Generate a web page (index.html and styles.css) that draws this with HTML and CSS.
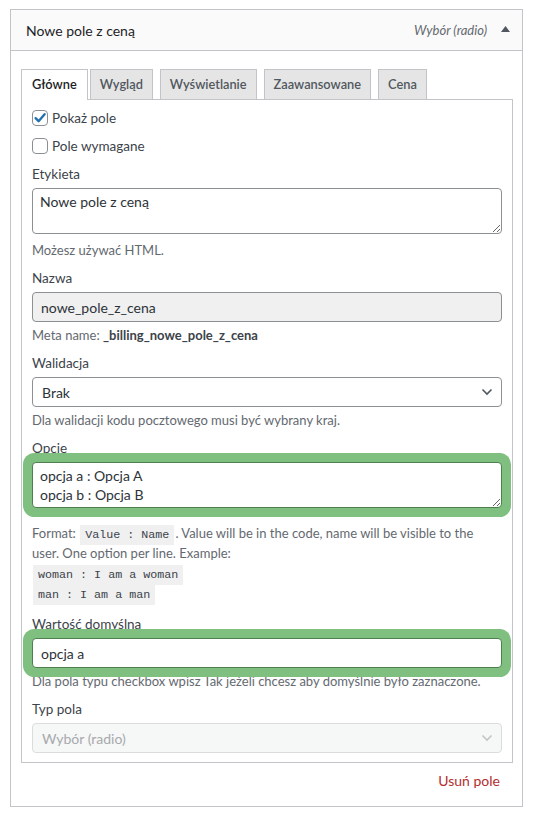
FILE: index.html
```html
<!DOCTYPE html>
<html lang="pl">
<head>
<meta charset="utf-8">
<title>Nowe pole z ceną</title>
<link rel="stylesheet" href="styles.css">
</head>
<body>
<div class="postbox">
  <div class="postbox-header">
    <span class="title">Nowe pole z ceną</span>
    <span class="type">Wybór (radio)</span>
    <span class="toggle"><svg width="9" height="6" viewBox="0 0 9 6"><path d="M0 6 L4.5 0 L9 6 Z" fill="#50575e"/></svg></span>
  </div>
  <div class="postbox-body">
    <div class="tabs">
      <a class="tab active">Główne</a>
      <a class="tab">Wygląd</a>
      <a class="tab">Wyświetlanie</a>
      <a class="tab">Zaawansowane</a>
      <a class="tab">Cena</a>
    </div>
    <div class="panel">
      <div class="check"><span class="cb"><svg width="14" height="14" viewBox="0 0 14 14"><path d="M2.6 7.2 L5.6 10.2 L11.6 3.2" fill="none" stroke="#2271b1" stroke-width="2.4" stroke-linecap="round" stroke-linejoin="round"/></svg></span>Pokaż pole</div>
      <div class="check"><span class="cb"></span>Pole wymagane</div>

      <div class="label">Etykieta</div>
      <textarea class="ta" readonly>Nowe pole z ceną</textarea>
      <p class="desc desc-first">Możesz używać HTML.</p>

      <div class="label">Nazwa</div>
      <input class="inp inp-ro" type="text" value="nowe_pole_z_cena" readonly>
      <p class="desc">Meta name: <strong>_billing_nowe_pole_z_cena</strong></p>

      <div class="label">Walidacja</div>
      <div class="sel">
        <span class="sel-val">Brak</span>
        <svg class="chev" width="12" height="8" viewBox="0 0 12 8"><path d="M1.5 1.5 L6 6 L10.5 1.5" fill="none" stroke="#50575e" stroke-width="1.6"/></svg>
      </div>
      <p class="desc">Dla walidacji kodu pocztowego musi być wybrany kraj.</p>

      <div class="label">Opcje</div>
      <textarea class="ta hl" readonly>opcja a : Opcja A
opcja b : Opcja B</textarea>
      <p class="desc desc-opts">Format: <code>Value : Name</code>. Value will be in the code, name will be visible to the user. One option per line. Example:<br><code>woman : I am a woman</code><br><code>man : I am a man</code></p>

      <div class="label label-after-code">Wartość domyślna</div>
      <input class="inp hl" type="text" value="opcja a" readonly>
      <p class="desc">Dla pola typu checkbox wpisz Tak jeżeli chcesz aby domyślnie było zaznaczone.</p>

      <div class="label">Typ pola</div>
      <div class="sel sel-disabled">
        <span class="sel-val">Wybór (radio)</span>
        <svg class="chev" width="12" height="8" viewBox="0 0 12 8"><path d="M1.5 1.5 L6 6 L10.5 1.5" fill="none" stroke="#c3c4c7" stroke-width="1.6"/></svg>
      </div>
    </div>
    <div class="footer"><a class="delete">Usuń pole</a></div>
  </div>
</div>
</body>
</html>
```

FILE: styles.css
```css
* { box-sizing: border-box; }

body {
  margin: 0;
  background: #fff;
  font-family: Lato, "Open Sans", sans-serif;
  font-size: 13px;
  color: #3c434a;
}

.postbox {
  margin: 9px 0 0 10px;
  width: 513px;
  height: 798px;
  border: 1px solid #c3c4c7;
  background: #fff;
}

.postbox-header {
  height: 41px;
  display: flex;
  align-items: center;
  padding: 0 12px 0 15px;
  border-bottom: 1px solid #c3c4c7;
  background: #fafafa;
}

.title {
  flex: 1;
  font-size: 14px;
  color: #1d2327;
}

.type {
  font-style: italic;
  font-size: 13px;
  color: #646970;
}

.toggle {
  display: flex;
  margin-left: 14px;
  padding-bottom: 2px;
}

.postbox-body {
  padding: 18px 9px 0 10px;
}

.tabs {
  display: flex;
  height: 30px;
}

.tab {
  display: block;
  height: 30px;
  line-height: 29px;
  padding: 0 9px;
  margin-left: 7px;
  border: 1px solid #c3c4c7;
  border-bottom: none;
  background: #e5e5e5;
  font-size: 12.8px;
  font-weight: 600;
  color: #50575e;
}

.tab.active {
  margin-left: 0;
  margin-right: -5px;
  padding: 0 10px;
  position: relative;
  height: 31px;
  background: #fff;
  color: #1d2327;
}

.panel {
  border: 1px solid #c3c4c7;
  padding: 4px 10px 9px 10px;
}

.check {
  display: flex;
  align-items: center;
  height: 28px;
  font-size: 13.5px;
  color: #3c434a;
}

.cb {
  width: 16px;
  height: 16px;
  margin-right: 4px;
  border: 1px solid #8c8f94;
  border-radius: 4px;
  display: flex;
  align-items: center;
  justify-content: center;
  background: #fff;
}

.label {
  line-height: 20px;
  margin-top: 4px;
  margin-bottom: 4px;
  font-size: 13.5px;
  color: #3c434a;
}

.check + .label { margin-top: 4px; }

.desc + .label { margin-top: 8px; }

.label-after-code { margin-top: 11px !important; }

.ta {
  display: block;
  width: 100%;
  height: 46px;
  margin: 0;
  padding: 3px 7px;
  border: 1px solid #8c8f94;
  border-radius: 4px;
  font-family: Lato, "Open Sans", sans-serif;
  font-size: 14px;
  line-height: 19px;
  color: #2c3338;
  background: #fff;
  resize: vertical;
  outline: none;
}

.inp {
  display: block;
  width: 100%;
  height: 30px;
  margin: 0;
  padding: 0 8px;
  border: 1px solid #8c8f94;
  border-radius: 4px;
  font-family: Lato, "Open Sans", sans-serif;
  font-size: 14px;
  color: #2c3338;
  background: #fff;
  outline: none;
}

.inp-ro {
  background: #f0f0f1;
}

.hl {
  position: relative;
  z-index: 1;
  border-color: #4e7f4e;
  box-shadow: 0 0 0 9px #7fbf7f;
}

.sel {
  display: flex;
  align-items: center;
  height: 30px;
  padding: 0 8px 0 9px;
  border: 1px solid #8c8f94;
  border-radius: 4px;
  background: #fff;
  font-size: 14px;
  color: #2c3338;
}

.sel-val { flex: 1; }

.sel-disabled {
  border-color: #dcdcde;
  background: #f6f7f7;
  color: #a7aaad;
}

.desc {
  margin: 3px 0 0;
  line-height: 20px;
  color: #646970;
}

.desc-first { margin-top: 6px; }

.desc-opts {
  margin-top: 15px;
  padding-right: 24px;
}

.desc strong {
  font-weight: 700;
  color: #3c434a;
}

code {
  font-family: "Liberation Mono", "DejaVu Sans Mono", monospace;
  font-size: 11.7px;
  line-height: 1;
  background: #f0f0f1;
  color: #3c434a;
  padding: 3px 5px;
  margin: 0 1px;
}

.footer {
  display: flex;
  justify-content: flex-end;
  padding: 8px 13px 0 0;
}

.delete {
  font-size: 14px;
  line-height: 20px;
  color: #b32d2e;
}
```
